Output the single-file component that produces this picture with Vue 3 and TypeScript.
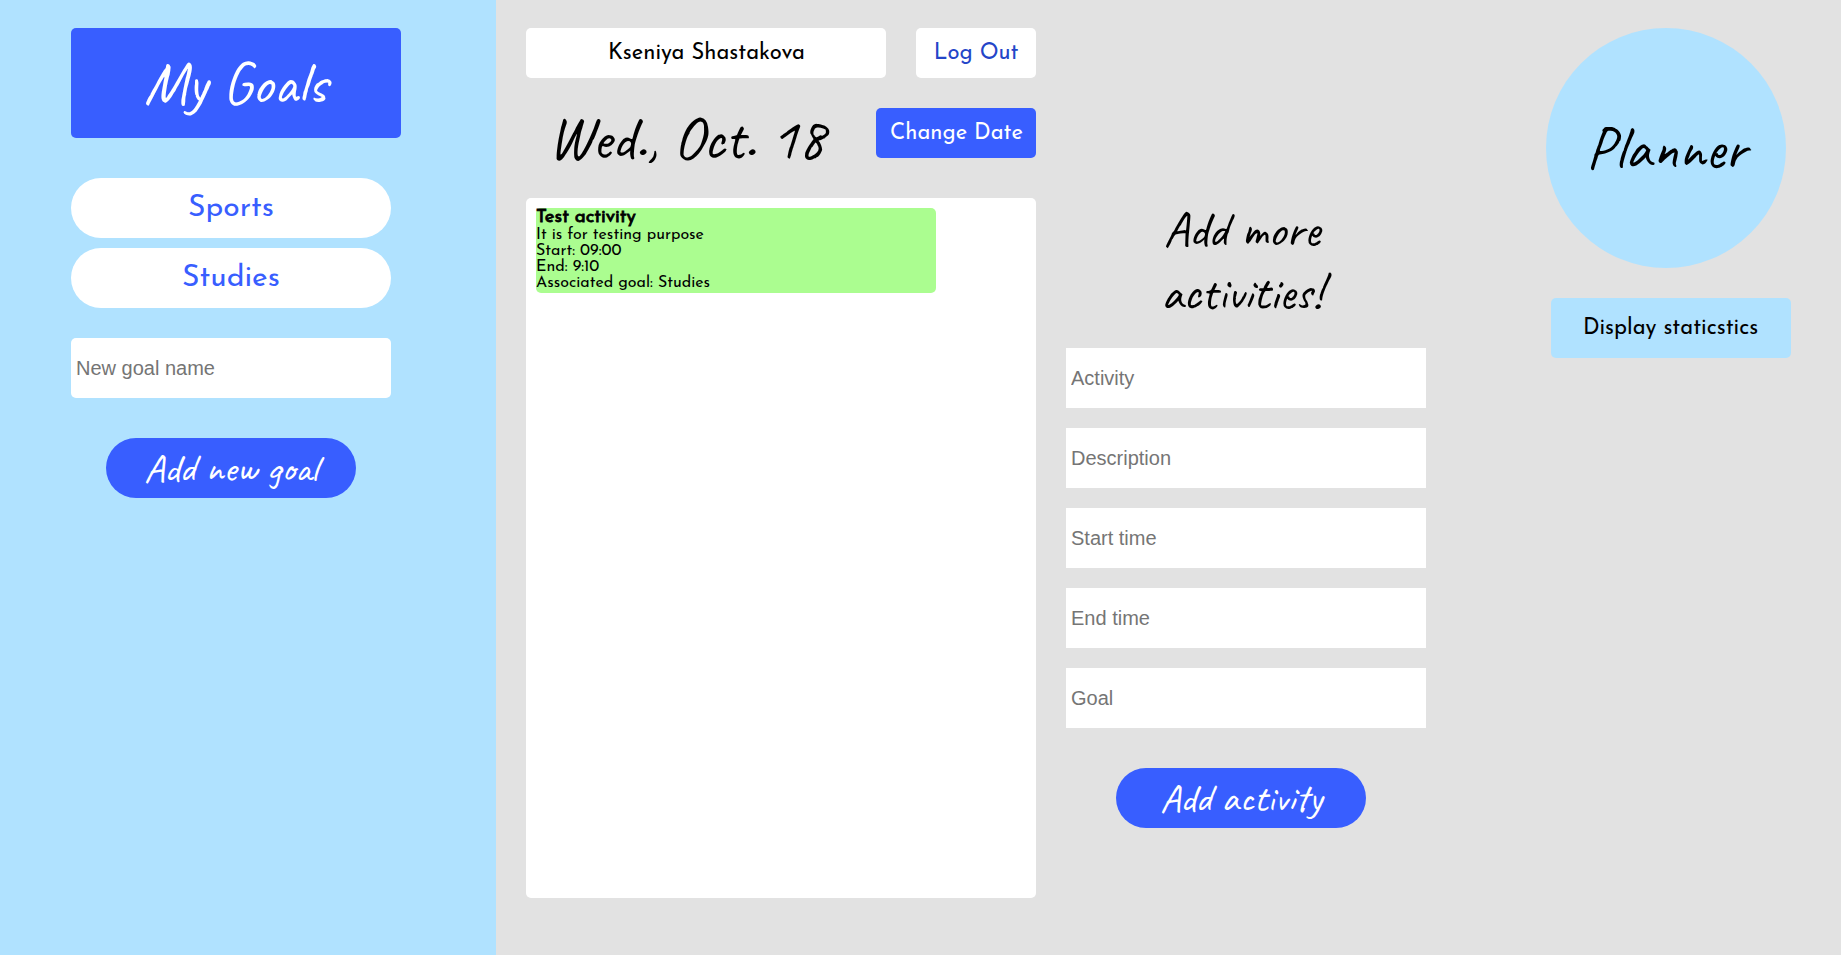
<script setup lang="ts">
import { ref } from 'vue'

interface Activity {
  title: string
  description: string
  start: string
  end: string
  goal: string
}

const userName = 'Kseniya Shastakova'
const currentDate = 'Wed., Oct. 18'
const goals = ref<string[]>(['Sports', 'Studies'])
const newGoal = ref('')

const activities = ref<Activity[]>([
  { title: 'Test activity', description: 'It is for testing purpose', start: '09:00', end: '9:10', goal: 'Studies' },
])

const fields = ['Activity', 'Description', 'Start time', 'End time', 'Goal']
const form = ref<string[]>(fields.map(() => ''))

function addGoal() {
  const name = newGoal.value.trim()
  if (name) goals.value.push(name)
  newGoal.value = ''
}

function addActivity() {
  const [title, description, start, end, goal] = form.value
  if (!title) return
  activities.value.push({ title, description, start, end, goal })
  form.value = fields.map(() => '')
}
</script>

<template>
  <div class="page">
    <aside class="goals">
      <h1 class="goals-title">My Goals</h1>
      <ul class="goal-list">
        <li v-for="goal in goals" :key="goal" class="goal">{{ goal }}</li>
      </ul>
      <input v-model="newGoal" class="field rounded" placeholder="New goal name" />
      <button class="pill add-goal" @click="addGoal">Add new goal</button>
    </aside>

    <main class="day">
      <div class="user-row">
        <div class="box user-name"><span class="label">{{ userName }}</span></div>
        <button class="box log-out"><span class="label">Log Out</span></button>
      </div>
      <div class="date-row">
        <h2 class="date">{{ currentDate }}</h2>
        <button class="box change-date"><span class="label">Change Date</span></button>
      </div>
      <section class="schedule">
        <article v-for="item in activities" :key="item.title" class="activity">
          <h3>{{ item.title }}</h3>
          <p>{{ item.description }}</p>
          <p>Start: {{ item.start }}</p>
          <p>End: {{ item.end }}</p>
          <p>Associated goal: {{ item.goal }}</p>
        </article>
      </section>
    </main>

    <section class="add-form">
      <div class="form-head">
        <h2 class="form-title">Add more<br />activities!</h2>
      </div>
      <div class="fields">
        <input v-for="(label, i) in fields" :key="label" v-model="form[i]" class="field" :placeholder="label" />
      </div>
      <button class="pill add-activity" @click="addActivity">Add activity</button>
    </section>

    <aside class="brand">
      <div class="logo">Planner</div>
      <button class="box stats"><span class="label">Display staticstics</span></button>
    </aside>
  </div>
</template>

<style>
body {
  margin: 0;
  background: #e2e2e2;
}
</style>

<style scoped>
* {
  box-sizing: border-box;
  margin: 0;
  padding: 0;
}
.page {
  display: flex;
  height: 955px;
  overflow: hidden;
  background: #e2e2e2;
  color: #000;
  font-family: "Josefin Sans", Lato, sans-serif;
}
button {
  border: 0;
  cursor: pointer;
}
.goals {
  width: 496px;
  padding: 28px 0 0 71px;
  background: #b0e2ff;
}
.goals-title {
  width: 330px;
  height: 110px;
  padding: 17px 0 0 73px;
  border-radius: 5px;
  background: #385eff;
  color: #fff;
  font: 400 60px "Caveat", cursive;
}
.goal-list {
  display: grid;
  gap: 10px;
  margin: 40px 0 30px;
  list-style: none;
}
.goal {
  width: 320px;
  height: 60px;
  border-radius: 30px;
  background: #fff;
  color: #385eff;
  font-size: 30px;
  line-height: 62px;
  text-align: center;
}
.field {
  display: block;
  width: 320px;
  height: 60px;
  padding: 0 5px;
  border: 0;
  outline: 0;
  background: #fff;
  font: 20px "Liberation Sans", Arial, sans-serif;
}
.field::placeholder {
  color: #757575;
}
.rounded {
  border-radius: 5px;
}
.pill {
  display: block;
  width: 250px;
  height: 60px;
  border-radius: 30px;
  background: #385eff;
  color: #fff;
  font: 400 40px/60px "Caveat", cursive;
}
.add-goal {
  margin: 40px 0 0 35px;
}
.day {
  width: 510px;
  margin: 28px 30px 0;
}
.user-row,
.date-row {
  display: flex;
  justify-content: space-between;
}
.box {
  display: flex;
  justify-content: center;
  height: 50px;
  border-radius: 5px;
  background: #fff;
  font: 400 24px/50px "Josefin Sans", Lato, sans-serif;
}
/* slightly condensed lettering for names and plain buttons */
.label {
  flex: none;
  white-space: nowrap;
  transform: scaleX(0.917);
}
.user-name {
  width: 360px;
}
.log-out {
  width: 120px;
  color: #2445c8;
}
.date-row {
  height: 90px;
  margin-top: 30px;
}
.date {
  padding-left: 22px;
  font: 400 60px/60px "Caveat", cursive;
}
.change-date {
  width: 160px;
  background: #385eff;
  color: #fff;
}
.schedule {
  height: 700px;
  padding: 10px;
  border-radius: 5px;
  background: #fff;
}
.activity {
  width: 400px;
  height: 85px;
  border-radius: 5px;
  background: #abfd90;
  font-size: 16px;
  line-height: 16px;
}
.activity h3 {
  font-size: 18.72px;
  font-weight: 400;
  line-height: 19px;
  -webkit-text-stroke: 0.8px #000;
}
.add-form {
  width: 360px;
  margin-top: 198px;
}
.form-head {
  display: flex;
  height: 150px;
  padding-left: 95px;
}
.form-title {
  font: 400 50px "Caveat", cursive;
  text-align: center;
}
.fields {
  display: grid;
  gap: 20px;
}
.add-form .field {
  width: 360px;
}
.add-activity {
  margin: 40px 0 0 50px;
}
.brand {
  width: 245px;
  margin: 28px 0 0 120px;
}
.logo {
  width: 240px;
  height: 240px;
  border-radius: 50%;
  background: #b0e2ff;
  font: 400 60px/240px "Caveat", cursive;
  text-align: center;
}
.stats {
  width: 240px;
  height: 60px;
  margin: 30px 0 0 5px;
  background: #b0e2ff;
  line-height: 60px;
}
</style>
